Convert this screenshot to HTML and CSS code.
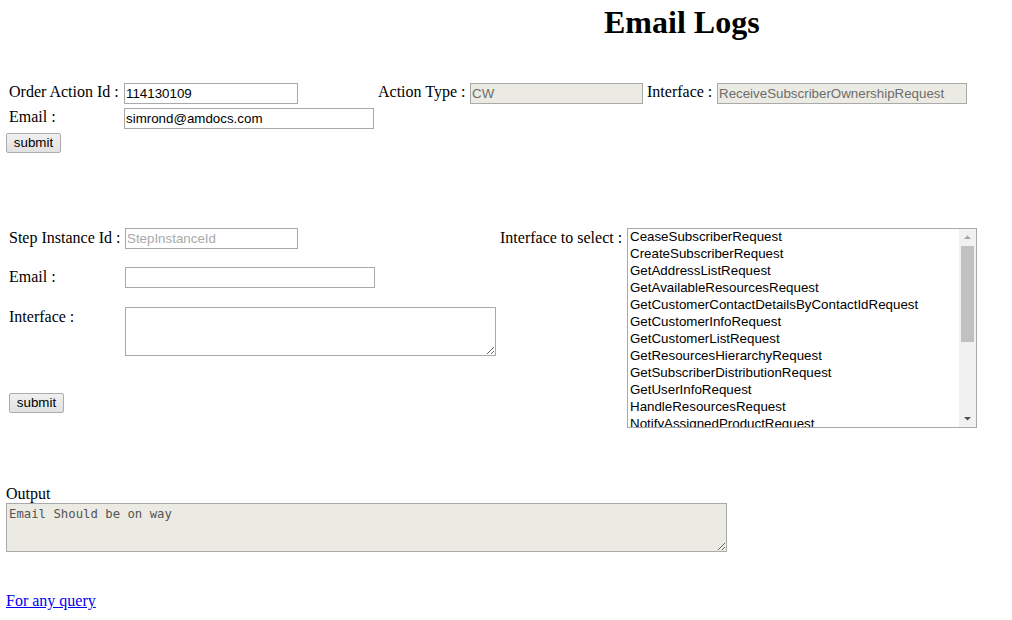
FILE: index.html
```html
<!DOCTYPE html>
<html>
<head>
<meta charset="utf-8">
<title>Email Logs</title>
<link rel="stylesheet" href="styles.css">
</head>
<body>
<h1 class="title">Email Logs</h1>

<form class="form1">
  <div class="row">
    <label class="lbl lbl-first">Order Action Id :</label>
    <input class="field w174" type="text" value="114130109">
    <label class="lbl lbl-action">Action Type :</label>
    <input class="field w173 ro" type="text" value="CW" readonly>
    <label class="lbl lbl-iface">Interface :</label>
    <input class="field w250 ro" type="text" value="ReceiveSubscriberOwnershipRequest" readonly>
  </div>
  <div class="row">
    <label class="lbl lbl-first">Email :</label>
    <input class="field w250" type="text" value="simrond@amdocs.com">
  </div>
  <div class="row">
    <button type="button" class="btn">submit</button>
  </div>
</form>

<form class="form2">
  <div class="col-left">
    <div class="row2">
      <label class="lbl lbl-second">Step Instance Id :</label>
      <input class="field w173" type="text" placeholder="StepInstanceId">
    </div>
    <div class="row2 r-email">
      <label class="lbl lbl-second">Email :</label>
      <input class="field w250" type="text">
    </div>
    <div class="row2 r-iface">
      <label class="lbl lbl-second">Interface :</label>
      <textarea class="area area-iface"></textarea>
    </div>
    <div class="row2 r-btn">
      <button type="button" class="btn">submit</button>
    </div>
  </div>
  <div class="col-right">
    <label class="lbl lbl-select">Interface to select :</label>
    <div class="listbox" role="listbox">
      <div class="options">
        <div class="opt">CeaseSubscriberRequest</div>
        <div class="opt">CreateSubscriberRequest</div>
        <div class="opt">GetAddressListRequest</div>
        <div class="opt">GetAvailableResourcesRequest</div>
        <div class="opt">GetCustomerContactDetailsByContactIdRequest</div>
        <div class="opt">GetCustomerInfoRequest</div>
        <div class="opt">GetCustomerListRequest</div>
        <div class="opt">GetResourcesHierarchyRequest</div>
        <div class="opt">GetSubscriberDistributionRequest</div>
        <div class="opt">GetUserInfoRequest</div>
        <div class="opt">HandleResourcesRequest</div>
        <div class="opt">NotifyAssignedProductRequest</div>
      </div>
      <div class="sbar">
        <div class="sbtn"><svg width="17" height="17" viewBox="0 0 17 17"><path d="M5 10 L12 10 L8.5 6.5 Z" fill="#a3a3a3"/></svg></div>
        <div class="sthumb"></div>
        <div class="strack"></div>
        <div class="sbtn"><svg width="17" height="17" viewBox="0 0 17 17"><path d="M5 7 L12 7 L8.5 10.5 Z" fill="#505050"/></svg></div>
      </div>
    </div>
  </div>
</form>

<div class="output">
  <div class="out-label">Output</div>
  <textarea class="area area-out" readonly>Email Should be on way</textarea>
</div>

<div class="query">
  <a href="#" class="link">For any query</a>
</div>
</body>
</html>
```

FILE: styles.css
```css
html, body {
  margin: 0;
  padding: 0;
  background: #ffffff;
}

body {
  font-family: "Liberation Serif", "Times New Roman", serif;
  font-size: 16px;
  color: #000000;
  width: 1012px;
}

.title {
  margin: 0;
  padding: 4px 0 0 604px;
  font-size: 32px;
  font-weight: bold;
  line-height: 37px;
}

.form1 {
  margin: 42px 0 0 0;
  padding-left: 6px;
}

.row {
  display: flex;
  align-items: flex-start;
  margin-bottom: 4px;
}

.lbl {
  display: block;
  line-height: 18px;
  white-space: nowrap;
  flex: none;
}

.lbl-first {
  width: 115px;
  padding-left: 3px;
}

.lbl-action {
  width: 92px;
  margin-left: 80px;
}

.lbl-iface {
  width: 70px;
  margin-left: 4px;
}

.field {
  box-sizing: border-box;
  height: 21px;
  margin: 0;
  padding: 1px 1px;
  border: 1px solid #a9a9a9;
  font-family: "Liberation Sans", Arial, sans-serif;
  font-size: 13.33px;
  color: #000000;
  background: #ffffff;
  flex: none;
  outline: none;
}

.field::placeholder {
  color: #a9a9a9;
}

.ro {
  background: #ebebe4;
  color: #6d6d6d;
}

.w173 { width: 173px; }
.w174 { width: 174px; }
.w250 { width: 250px; }

.btn {
  box-sizing: border-box;
  width: 55px;
  height: 20px;
  margin: 0;
  padding: 0;
  border: 1px solid #acacac;
  border-radius: 2px;
  background: linear-gradient(#f0f0f0, #e1e1e1);
  font-family: "Liberation Sans", Arial, sans-serif;
  font-size: 13.33px;
  color: #000000;
  line-height: 18px;
}

.form2 {
  display: flex;
  align-items: flex-start;
  margin-top: 75px;
  padding-left: 9px;
}

.col-left {
  width: 491px;
  flex: none;
}

.row2 {
  display: flex;
  align-items: flex-start;
}

.lbl-second {
  width: 116px;
  padding-top: 1px;
}

.r-email { margin-top: 18px; }
.r-iface { margin-top: 19px; }
.r-btn { margin-top: 37px; }

.area {
  box-sizing: border-box;
  margin: 0;
  border: 1px solid #a9a9a9;
  padding: 2px;
  display: block;
  outline: none;
}

.area-iface {
  width: 371px;
  height: 49px;
  background: #ffffff;
}

.col-right {
  display: flex;
  align-items: flex-start;
}

.lbl-select {
  width: 127px;
  padding-top: 1px;
}

.listbox {
  box-sizing: border-box;
  width: 350px;
  height: 200px;
  border: 1px solid #a9a9a9;
  display: flex;
  overflow: hidden;
  background: #ffffff;
}

.options {
  flex: 1;
  overflow: hidden;
  font-family: "Liberation Sans", Arial, sans-serif;
  font-size: 13.33px;
  color: #000000;
}

.opt {
  height: 17px;
  line-height: 16px;
  padding: 0 2px;
  white-space: nowrap;
}

.sbar {
  width: 17px;
  flex: none;
  background: #f1f1f1;
  display: flex;
  flex-direction: column;
}

.sbtn {
  height: 17px;
  flex: none;
}

.sbtn svg {
  display: block;
}

.sthumb {
  height: 96px;
  margin: 0 2px;
  background: #c1c1c1;
  flex: none;
}

.strack {
  flex: 1;
}

.output {
  margin-top: 57px;
  padding-left: 6px;
}

.out-label {
  line-height: 18px;
}

.area-out {
  width: 721px;
  height: 49px;
  background: #ebebe4;
  color: #545454;
  font-family: "DejaVu Sans Mono", "Liberation Mono", monospace;
  font-size: 12.3px;
  padding: 3px 2px 2px 2px;
  resize: vertical;
}

.query {
  margin-top: 40px;
  padding-left: 6px;
  line-height: 18px;
}

.link {
  color: #0000ee;
  text-decoration: underline;
}
```
